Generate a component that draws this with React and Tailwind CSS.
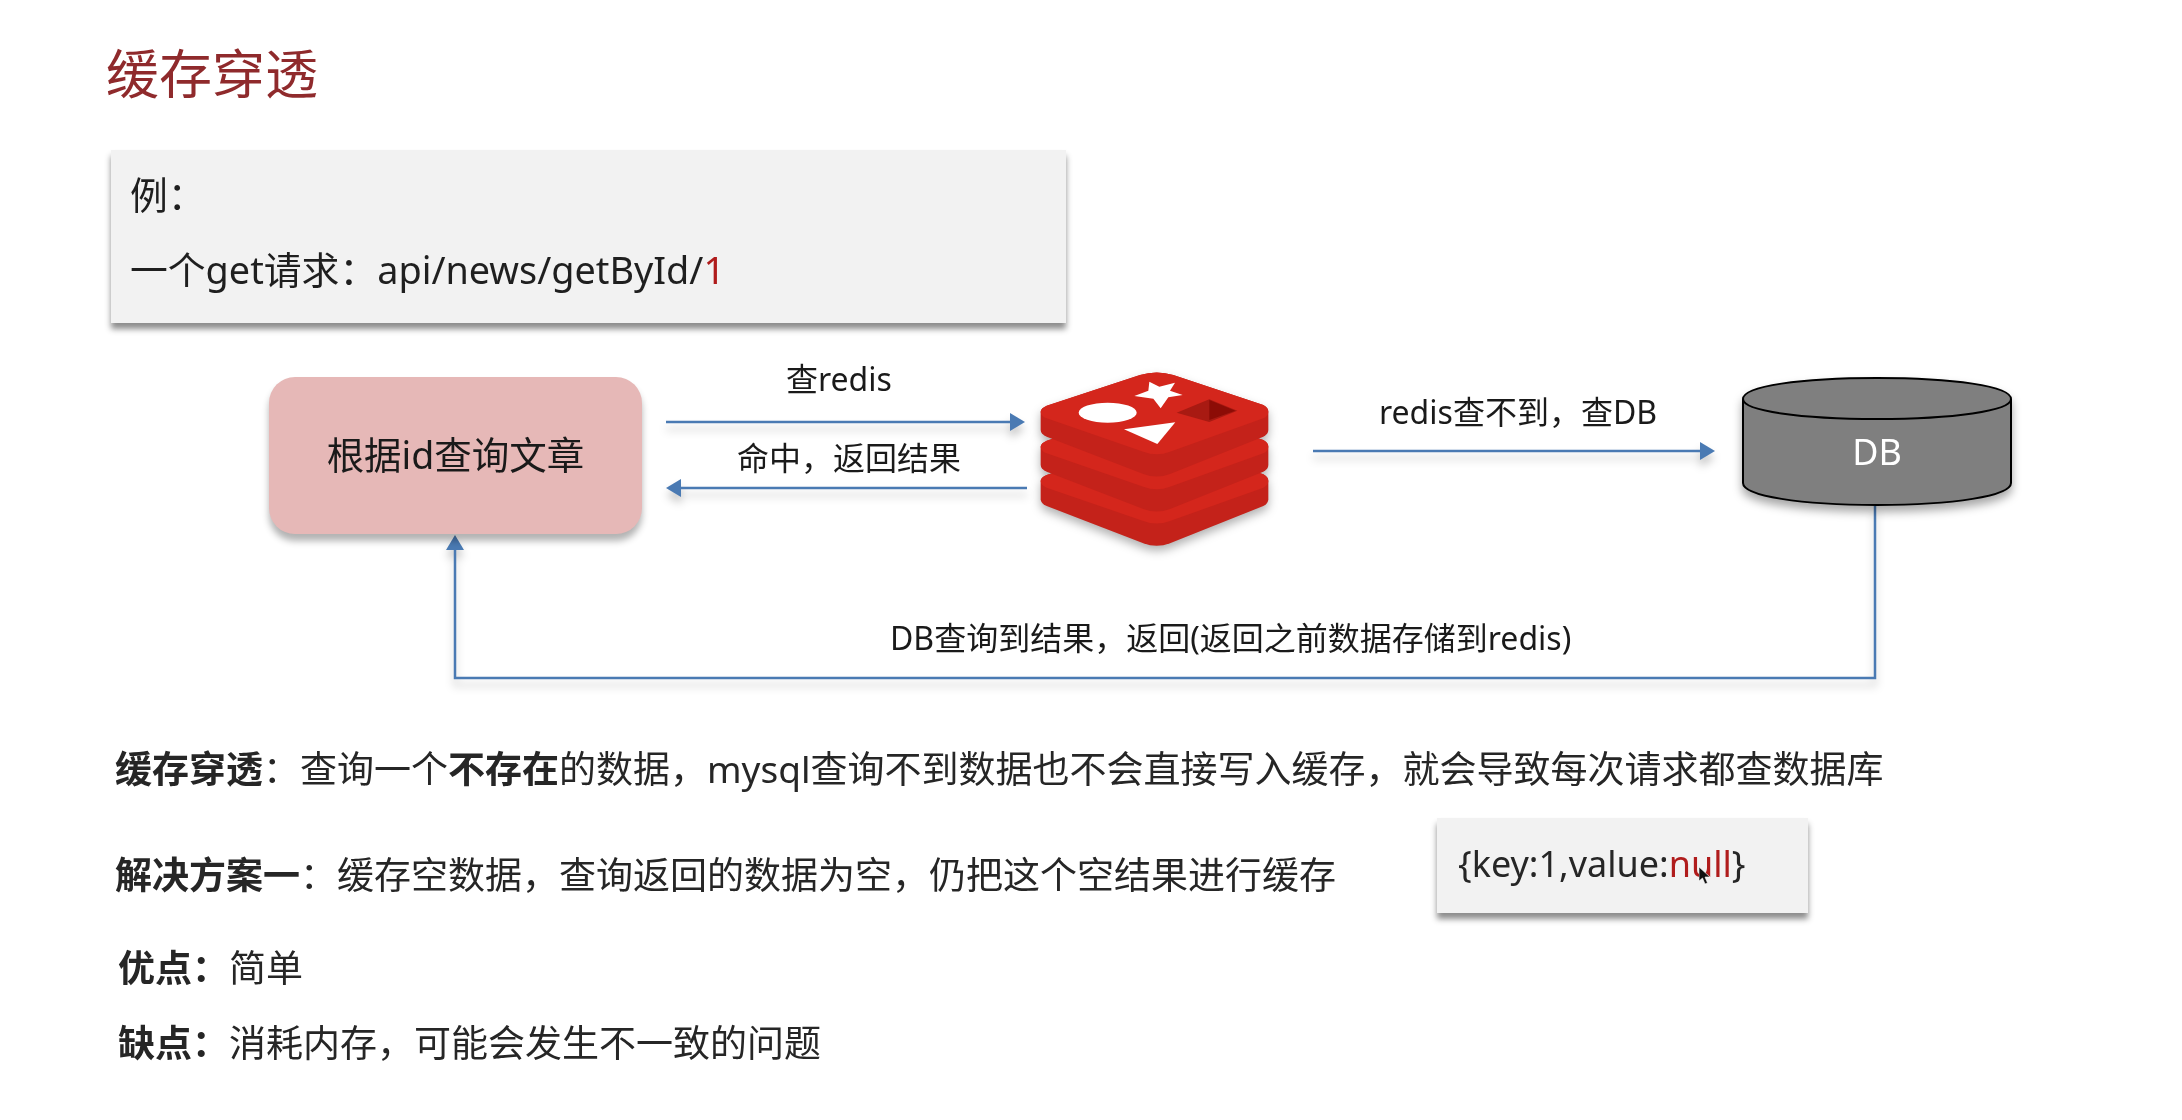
import React from 'react';

const ARROW_BLUE = '#4a7ab3';

function RedisLayer({ dy, children }) {
  return (
    <g transform={`translate(0 ${dy})`}>
      {/* side */}
      <path
        d="M122 215 Q122 205 140 197 L420 105 Q470 90 520 105 L790 195 Q805 203 805 215 L805 270 Q805 283 790 290 L510 402 Q470 417 430 402 L140 290 Q122 283 122 270 Z"
        fill="#c4221a"
      />
      {/* face */}
      <path
        d="M122 215 Q122 205 140 197 L420 105 Q470 90 520 105 L790 195 Q805 203 805 215 Q805 228 790 235 L510 335 Q470 350 430 335 L140 235 Q122 228 122 215 Z"
        fill="#d4261c"
      />
      {children}
    </g>
  );
}

function RedisLogo() {
  return (
    <svg
      viewBox="0 0 960 720"
      className="absolute left-[1000px] top-0 w-[320px] h-[240px] drop-shadow-[0_5px_5px_rgba(0,0,0,0.3)]"
    >
      <RedisLayer dy={208} />
      <RedisLayer dy={105} />
      <RedisLayer dy={0}>
        <ellipse cx="323" cy="218" rx="87" ry="30" fill="#ffffff" />
        <path d="M448 125 L478 140 L525 128 L510 152 L548 165 L505 172 L482 205 L460 176 L403 168 L445 152 Z" fill="#ffffff" />
        <path d="M372 268 L526 247 L472 312 Z" fill="#ffffff" />
        <path d="M530 218 L628 178 L712 212 L628 246 Z" fill="#a81a12" />
        <path d="M628 180 L706 212 L628 240 Z" fill="#8c0c06" />
      </RedisLayer>
    </svg>
  );
}

function Connectors() {
  return (
    <svg
      viewBox="0 340 2182 360"
      className="absolute inset-0 w-full h-full drop-shadow-[0_7px_4px_rgba(0,0,0,0.22)]"
      fill="none"
    >
      <g stroke={ARROW_BLUE} strokeWidth="2.5">
        <path d="M666 422 H1010" />
        <path d="M1027 488 H680" />
        <path d="M1313 451 H1702" />
        <path d="M1875 506 V678 H455 V548" />
      </g>
      <g fill={ARROW_BLUE}>
        <path d="M1010 413 L1025 422 L1010 431 Z" />
        <path d="M681 479 L666 488 L681 497 Z" />
        <path d="M1700 442 L1715 451 L1700 460 Z" />
        <path d="M446 550 L455 535 L464 550 Z" />
      </g>
    </svg>
  );
}

function Cylinder() {
  return (
    <div className="absolute left-[1741px] top-[35px] w-[272px] h-[134px]">
      <svg viewBox="0 0 272 134" className="absolute inset-0 w-full h-full drop-shadow-[0_6px_5px_rgba(0,0,0,0.35)]">
        <path
          d="M2 24 C2 11 60 3 136 3 C212 3 270 11 270 24 V108 C270 121 212 130 136 130 C60 130 2 121 2 108 Z"
          fill="#7f7f7f"
          stroke="#000000"
          strokeWidth="2"
        />
        <path d="M2 24 C2 36 60 44 136 44 C212 44 270 36 270 24" fill="none" stroke="#000000" strokeWidth="2" />
      </svg>
      <span className="absolute left-0 right-0 top-[52px] text-center text-[36px] leading-[50px] text-white">DB</span>
    </div>
  );
}

function Label({ className, children }) {
  return <span className={`absolute whitespace-nowrap text-[32px] leading-[44px] text-[#1a1a1a] ${className}`}>{children}</span>;
}

export default function App() {
  return (
    <div className="w-[2182px] h-[1120px] overflow-hidden bg-white pt-[44px] blur-[0.4px] font-['Noto_Sans','Noto_Sans_CJK_SC',sans-serif] text-[#262626]">
      <h1 className="ml-[106px] text-[53px] leading-[60px] text-[#8f2a2c]">缓存穿透</h1>

      {/* 例子 */}
      <div className="ml-[111px] mt-[46px] w-[955px] h-[173px] bg-[#f2f2f2] pl-[19px] pt-[7px] text-[37.8px] leading-[75px] text-[#1f1f1f] shadow-[0_6px_6px_rgba(0,0,0,0.45)]">
        <p>例&#xFF1A;</p>
        <p>
          一个get请求&#xFF1A;api/news/getById/<span className="text-[#b01c1c]">1</span>
        </p>
      </div>

      {/* 流程图 */}
      <div className="relative mt-[17px] h-[360px]">
        <Connectors />
        <div className="absolute left-[269px] top-[37px] w-[373px] h-[157px] rounded-[26px] bg-[#e6b8b7] flex items-center justify-center text-[37.5px] text-[#1a1a1a] shadow-[0_7px_7px_rgba(0,0,0,0.3)]">
          根据id查询文章
        </div>
        <RedisLogo />
        <Cylinder />
        <Label className="left-[786px] top-[17px]">查redis</Label>
        <Label className="left-[737px] top-[96px]">命中&#xFF0C;返回结果</Label>
        <Label className="left-[1379px] top-[50px]">redis查不到&#xFF0C;查DB</Label>
        <Label className="left-[890px] top-[276px]">DB查询到结果&#xFF0C;返回(返回之前数据存储到redis)</Label>
      </div>

      {/* 说明 */}
      <div className="text-[37px] leading-[50px]">
        <p className="ml-[115px] mt-[44px] whitespace-nowrap">
          <b>缓存穿透</b>&#xFF1A;查询一个<b>不存在</b>的数据&#xFF0C;mysql查询不到数据也不会直接写入缓存&#xFF0C;就会导致每次请求都查数据库
        </p>
        <div className="mt-[24px] flex items-start">
          <p className="ml-[115px] mt-[32px] whitespace-nowrap">
            <b>解决方案一</b>&#xFF1A;缓存空数据&#xFF0C;查询返回的数据为空&#xFF0C;仍把这个空结果进行缓存
          </p>
          <div className="relative ml-auto mr-[374px] w-[371px] h-[95px] bg-[#f2f2f2] pl-[21px] pt-[21px] text-[36px] leading-[50px] shadow-[0_6px_6px_rgba(0,0,0,0.45)]">
            {'{key:1,value:'}
            <span className="text-[#b01c1c]">null</span>
            {'}'}
            <svg viewBox="0 0 12 18" className="absolute left-[262px] top-[49px] w-[12px] h-[18px]">
              <path d="M0 0 L0 14 L3.5 11 L6 17 L8.5 16 L6 10 L11 10 Z" fill="#111111" stroke="#ffffff" strokeWidth="0.6" />
            </svg>
          </div>
        </div>
        <p className="ml-[118px] mt-[30px]">
          <b>优点&#xFF1A;</b>简单
        </p>
        <p className="ml-[118px] mt-[25px]">
          <b>缺点&#xFF1A;</b>消耗内存&#xFF0C;可能会发生不一致的问题
        </p>
      </div>
    </div>
  );
}
